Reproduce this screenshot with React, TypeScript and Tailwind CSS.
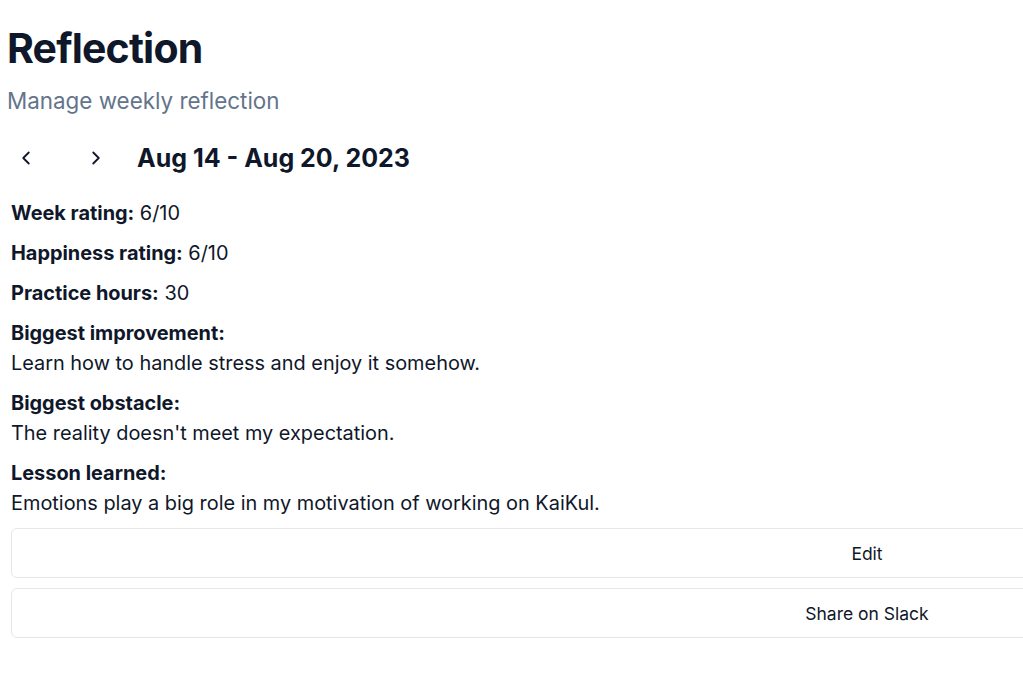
import { ChevronLeft, ChevronRight } from "lucide-react";

const fields = [
  { label: "Week rating:", value: "6/10", inline: true },
  { label: "Happiness rating:", value: "6/10", inline: true },
  { label: "Practice hours:", value: "30", inline: true },
  { label: "Biggest improvement:", value: "Learn how to handle stress and enjoy it somehow.", inline: false },
  { label: "Biggest obstacle:", value: "The reality doesn't meet my expectation.", inline: false },
  { label: "Lesson learned:", value: "Emotions play a big role in my motivation of working on KaiKul.", inline: false },
];

export default function App() {
  return (
    <div className="w-screen min-h-screen overflow-hidden bg-white text-[#0f172a] font-['Inter',sans-serif]">
      <div className="pl-[7px]">
        <h1 className="mt-6 text-[41px] leading-[48px] font-bold tracking-[-0.02em]">Reflection</h1>
        <p className="mt-[15px] text-[22.4px] leading-7 text-[#64748b]">Manage weekly reflection</p>
      </div>

      <div className="mt-[23px] flex items-center">
        <button className="ml-[6px] flex h-10 w-10 items-center justify-center rounded-md">
          <ChevronLeft size={22} strokeWidth={2} />
        </button>
        <button className="ml-[30px] flex h-10 w-10 items-center justify-center rounded-md">
          <ChevronRight size={22} strokeWidth={2} />
        </button>
        <h2 className="ml-[21px] text-[25px] leading-8 font-bold">Aug 14 - Aug 20, 2023</h2>
      </div>

      <div className="mt-5 flex flex-col gap-[10px] pl-[11px] text-[19.9px] leading-[30px]">
        {fields.map((f) =>
          f.inline ? (
            <p key={f.label}>
              <span className="font-bold">{f.label}</span> {f.value}
            </p>
          ) : (
            <div key={f.label}>
              <p className="font-bold">{f.label}</p>
              <p>{f.value}</p>
            </div>
          )
        )}
      </div>

      <div className="mt-[10px] ml-[11px] flex w-[1712px] flex-col gap-[10px]">
        <button className="h-[50px] w-full rounded-md border border-[#e5e7eb] bg-white pt-[2px] text-[17.5px]">Edit</button>
        <button className="h-[50px] w-full rounded-md border border-[#e5e7eb] bg-white pt-[2px] text-[17.5px]">Share on Slack</button>
      </div>
    </div>
  );
}
